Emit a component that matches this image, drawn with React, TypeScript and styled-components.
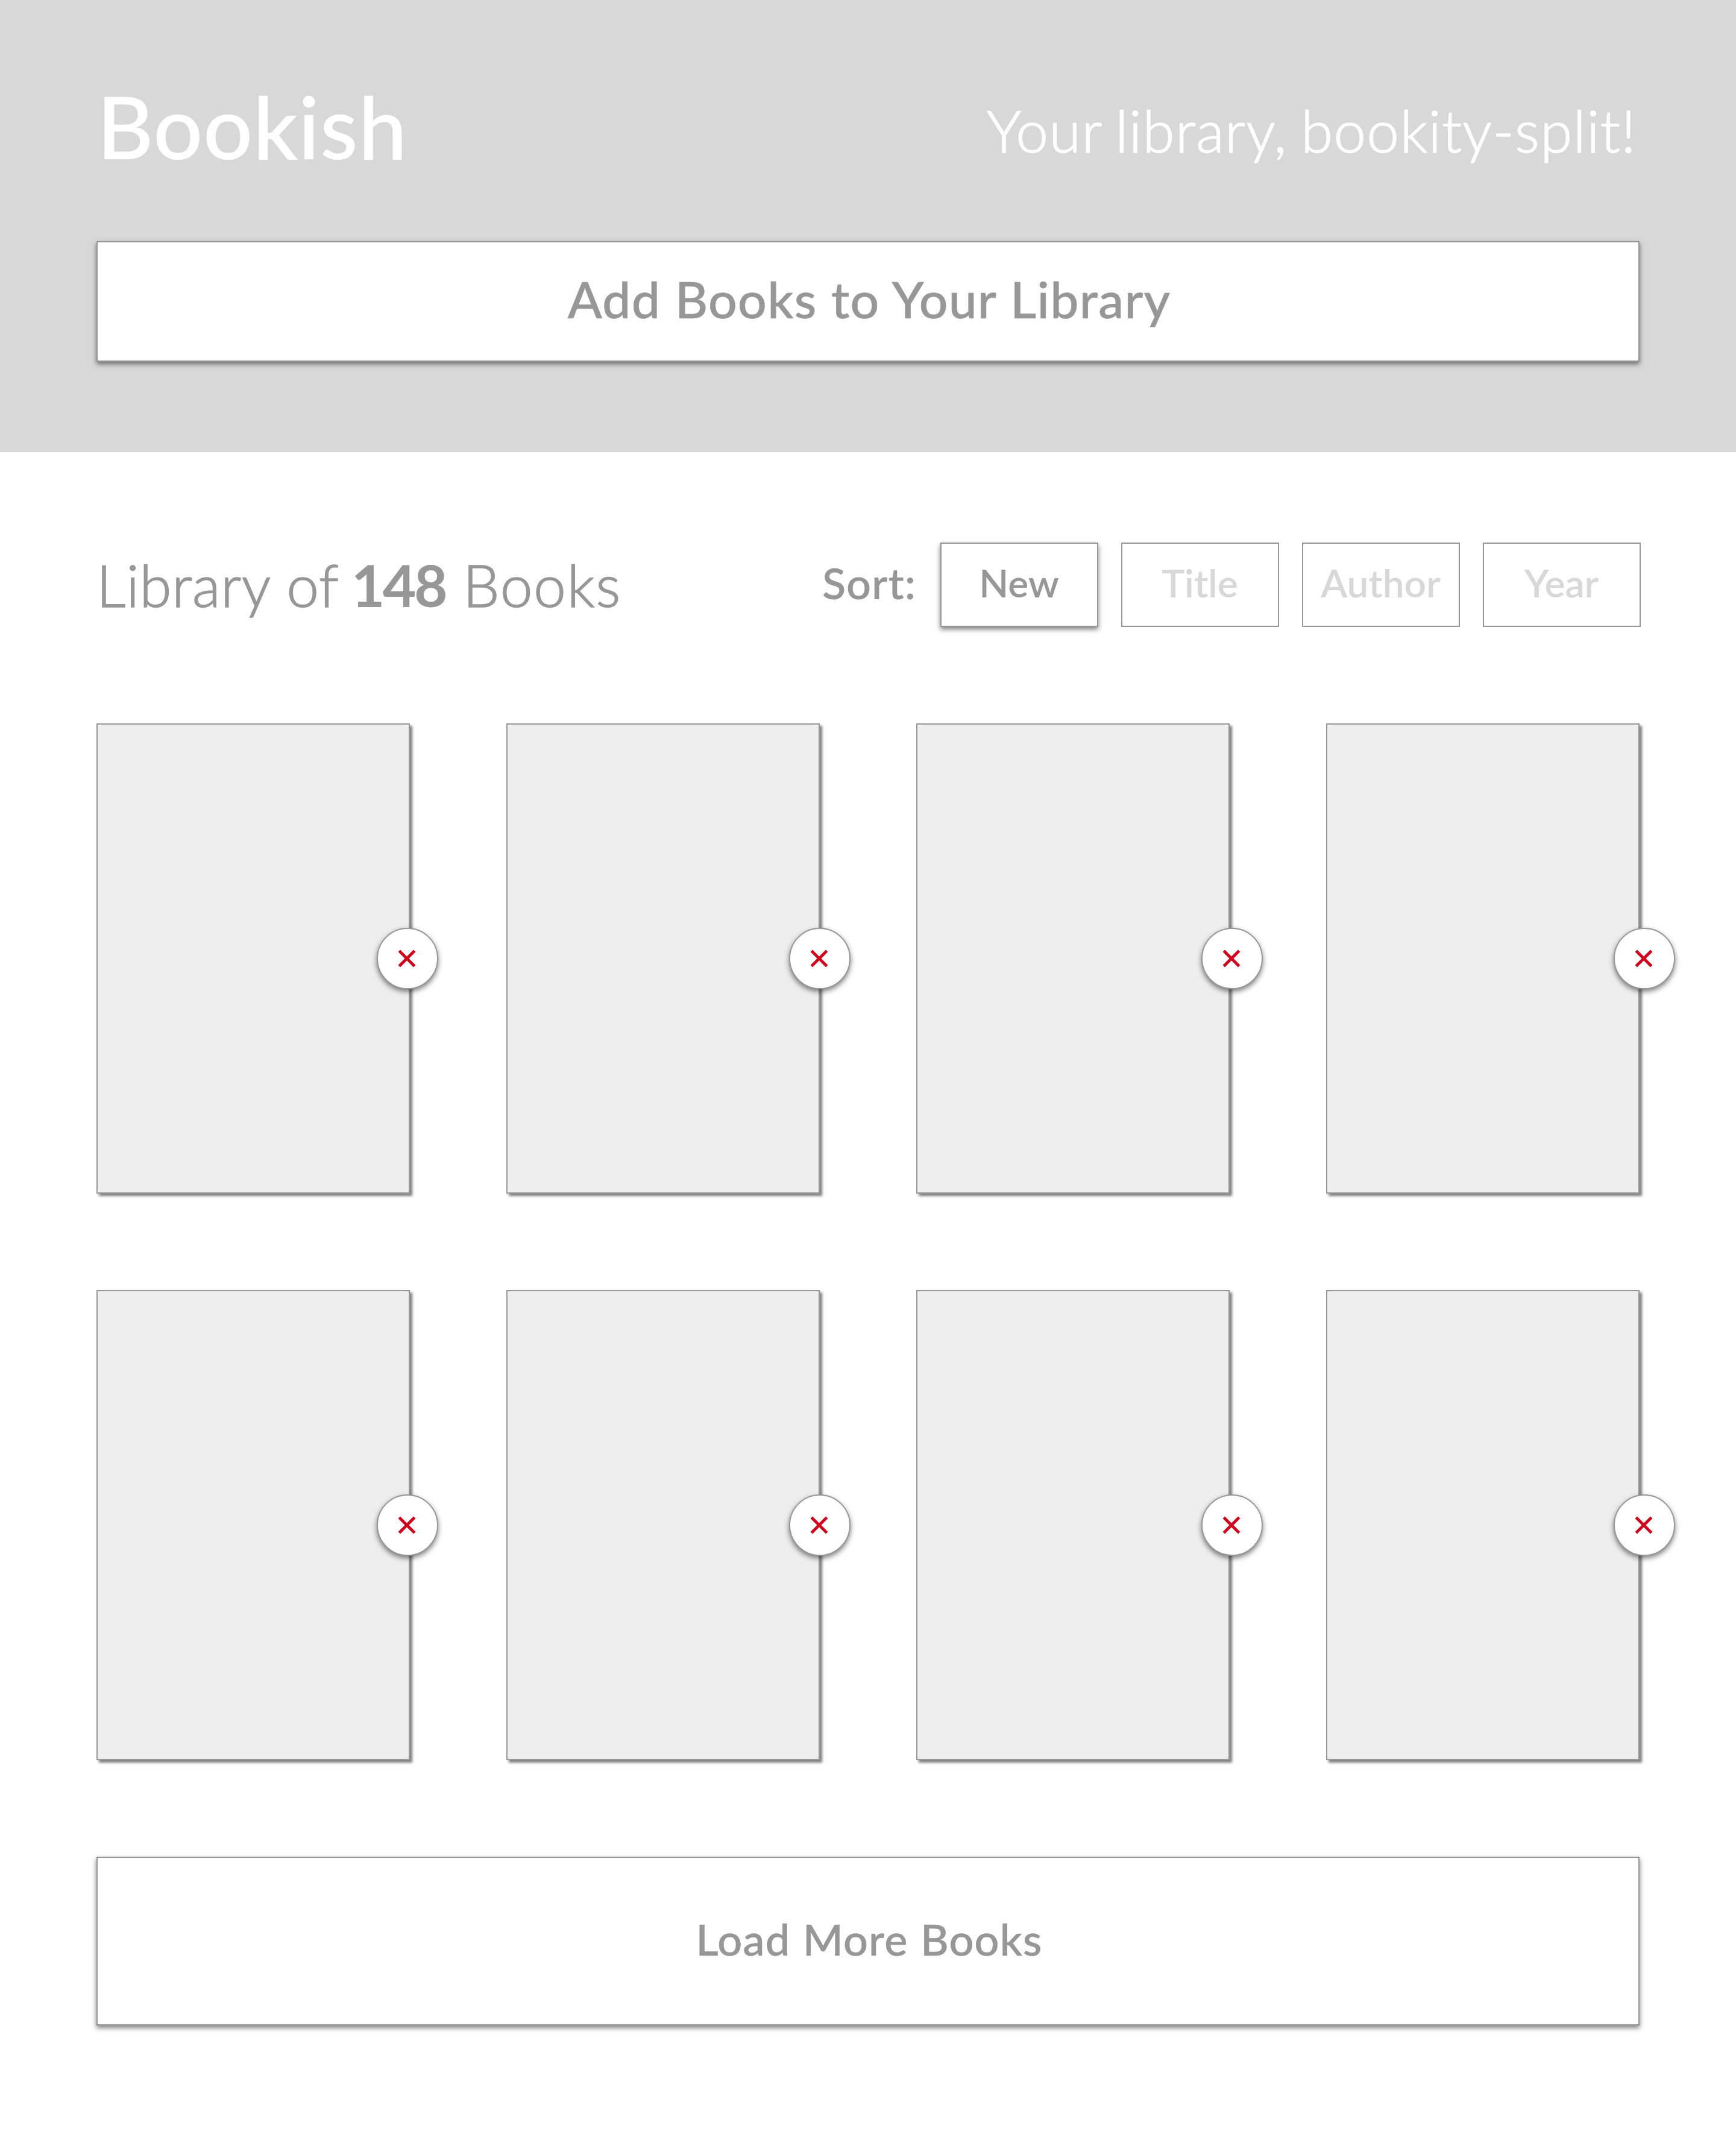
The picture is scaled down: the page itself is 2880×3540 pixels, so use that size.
import React from 'react';
import styled, { createGlobalStyle } from 'styled-components';

const GlobalStyle = createGlobalStyle`
  *, *::before, *::after { box-sizing: border-box; }
  body {
    margin: 0;
    background: #ffffff;
    color: #979797;
    font-family: Lato, "Open Sans", sans-serif;
  }
  button { font-family: inherit; margin: 0; padding: 0; cursor: pointer; }
`;

const Page = styled.div`
  width: 2880px;
  height: 3540px;
  overflow: hidden;
`;

const Header = styled.header`
  height: 750px;
  padding: 123px 160px 0;
  background: #d8d8d8;
`;

const Masthead = styled.div`
  display: flex;
  justify-content: space-between;
  align-items: flex-start;
  height: 277px;
  color: #ffffff;
`;

const Brand = styled.h1`
  margin: 0 0 0 1px;
  font-size: 144px;
  line-height: 172px;
  font-weight: 500;
  letter-spacing: 0.9px;
  -webkit-text-stroke: 0.6px currentColor;
`;

const Tagline = styled.p`
  flex: none;
  width: 1083px;
  margin: 35px 0 0;
  font-size: 96px;
  line-height: 116px;
  font-weight: 300;
  letter-spacing: 1.4px;
  word-spacing: -5px;
  white-space: nowrap;
  -webkit-text-stroke: 1.6px currentColor;
`;

const WideButton = styled.button<{ $height: number; $size: number; $lift: number; $tracking: number }>`
  display: flex;
  align-items: center;
  justify-content: center;
  width: 100%;
  height: ${p => p.$height}px;
  padding: 0 0 ${p => p.$lift}px 4px;
  border: 2px solid #979797;
  background: #ffffff;
  box-shadow: 0 4px 8px rgba(0, 0, 0, 0.5);
  color: #979797;
  font-size: ${p => p.$size}px;
  font-weight: 500;
  letter-spacing: ${p => p.$tracking}px;
  word-spacing: 1px;
  -webkit-text-stroke: 0.6px currentColor;
`;

const Main = styled.main`
  padding: 150px 160px 0;
`;

const Toolbar = styled.div`
  display: flex;
  justify-content: space-between;
  align-items: center;
  height: 140px;
  margin-right: -2px;
`;

const Heading = styled.h2`
  margin: 0;
  padding-bottom: 1px;
  font-size: 96px;
  line-height: 116px;
  font-weight: 300;
  letter-spacing: 0.8px;
  word-spacing: 1px;
  white-space: nowrap;
  -webkit-text-stroke: 1.6px currentColor;
`;

const Count = styled.strong`
  margin: 0 1px 0 -6px;
  font-weight: 700;
  letter-spacing: -3.5px;
  -webkit-text-stroke: 0;
`;

const Noun = styled.span`
  letter-spacing: 1.9px;
`;

const SortGroup = styled.div`
  display: flex;
  align-items: center;
  gap: 38px;
`;

const SortLabel = styled.span`
  width: 158px;
  padding-bottom: 8px;
  font-size: 72px;
  line-height: 86px;
  font-weight: 600;
  letter-spacing: 0.9px;
  white-space: nowrap;
`;

const SortButton = styled.button<{ $active: boolean }>`
  display: flex;
  align-items: center;
  justify-content: center;
  width: 262px;
  height: 140px;
  padding: 0 1px 8px 0;
  border: 2px solid #979797;
  background: #ffffff;
  box-shadow: ${p => (p.$active ? '0 4px 8px rgba(0, 0, 0, 0.5)' : 'none')};
  color: ${p => (p.$active ? '#979797' : '#d8d8d8')};
  font-size: 64px;
  font-weight: 600;
`;

const Shelf = styled.div`
  display: grid;
  grid-template-columns: repeat(4, 520px);
  gap: 160px;
  padding: 160px 0;
`;

const Book = styled.article`
  position: relative;
  height: 780px;
  border: 2px solid #979797;
  background: #eeeeee;
  box-shadow: 4px 4px 4px rgba(0, 0, 0, 0.5);
`;

/* Badge straddling the book's right edge; it drifts outward by column. */
const RemoveButton = styled.button<{ $column: number }>`
  position: absolute;
  top: calc(50% - 51px);
  right: ${p => -49 - p.$column * 4}px;
  display: flex;
  align-items: center;
  justify-content: center;
  width: 102px;
  height: 102px;
  padding-right: 2px;
  border: 2px solid #979797;
  border-radius: 50%;
  background: #ffffff;
  box-shadow: 0 4px 8px rgba(0, 0, 0, 0.5);
`;

const sorts = ['New', 'Title', 'Author', 'Year'];
const books = Array.from({ length: 8 }, (_, i) => i);

function Cross() {
  return (
    <svg width="30" height="30" viewBox="0 0 30 30" aria-hidden="true">
      <path d="M2.3 2.3 27.7 27.7M27.7 2.3 2.3 27.7" stroke="#d0021b" strokeWidth="4.8" />
    </svg>
  );
}

export default function App() {
  return (
    <Page>
      <GlobalStyle />
      <Header>
        <Masthead>
          <Brand>Bookish</Brand>
          <Tagline>Your library, bookity-split!</Tagline>
        </Masthead>
        <WideButton $height={200} $size={84} $lift={10} $tracking={1.3}>
          Add Books to Your Library
        </WideButton>
      </Header>
      <Main>
        <Toolbar>
          <Heading>
            Library of <Count>148</Count> <Noun>Books</Noun>
          </Heading>
          <SortGroup>
            <SortLabel>Sort:</SortLabel>
            {sorts.map((name, i) => (
              <SortButton key={name} $active={i === 0}>
                {name}
              </SortButton>
            ))}
          </SortGroup>
        </Toolbar>
        <Shelf>
          {books.map(i => (
            <Book key={i}>
              <RemoveButton $column={i % 4} aria-label="Remove book">
                <Cross />
              </RemoveButton>
            </Book>
          ))}
        </Shelf>
        <WideButton $height={280} $size={72} $lift={8} $tracking={1.2}>
          Load More Books
        </WideButton>
      </Main>
    </Page>
  );
}
